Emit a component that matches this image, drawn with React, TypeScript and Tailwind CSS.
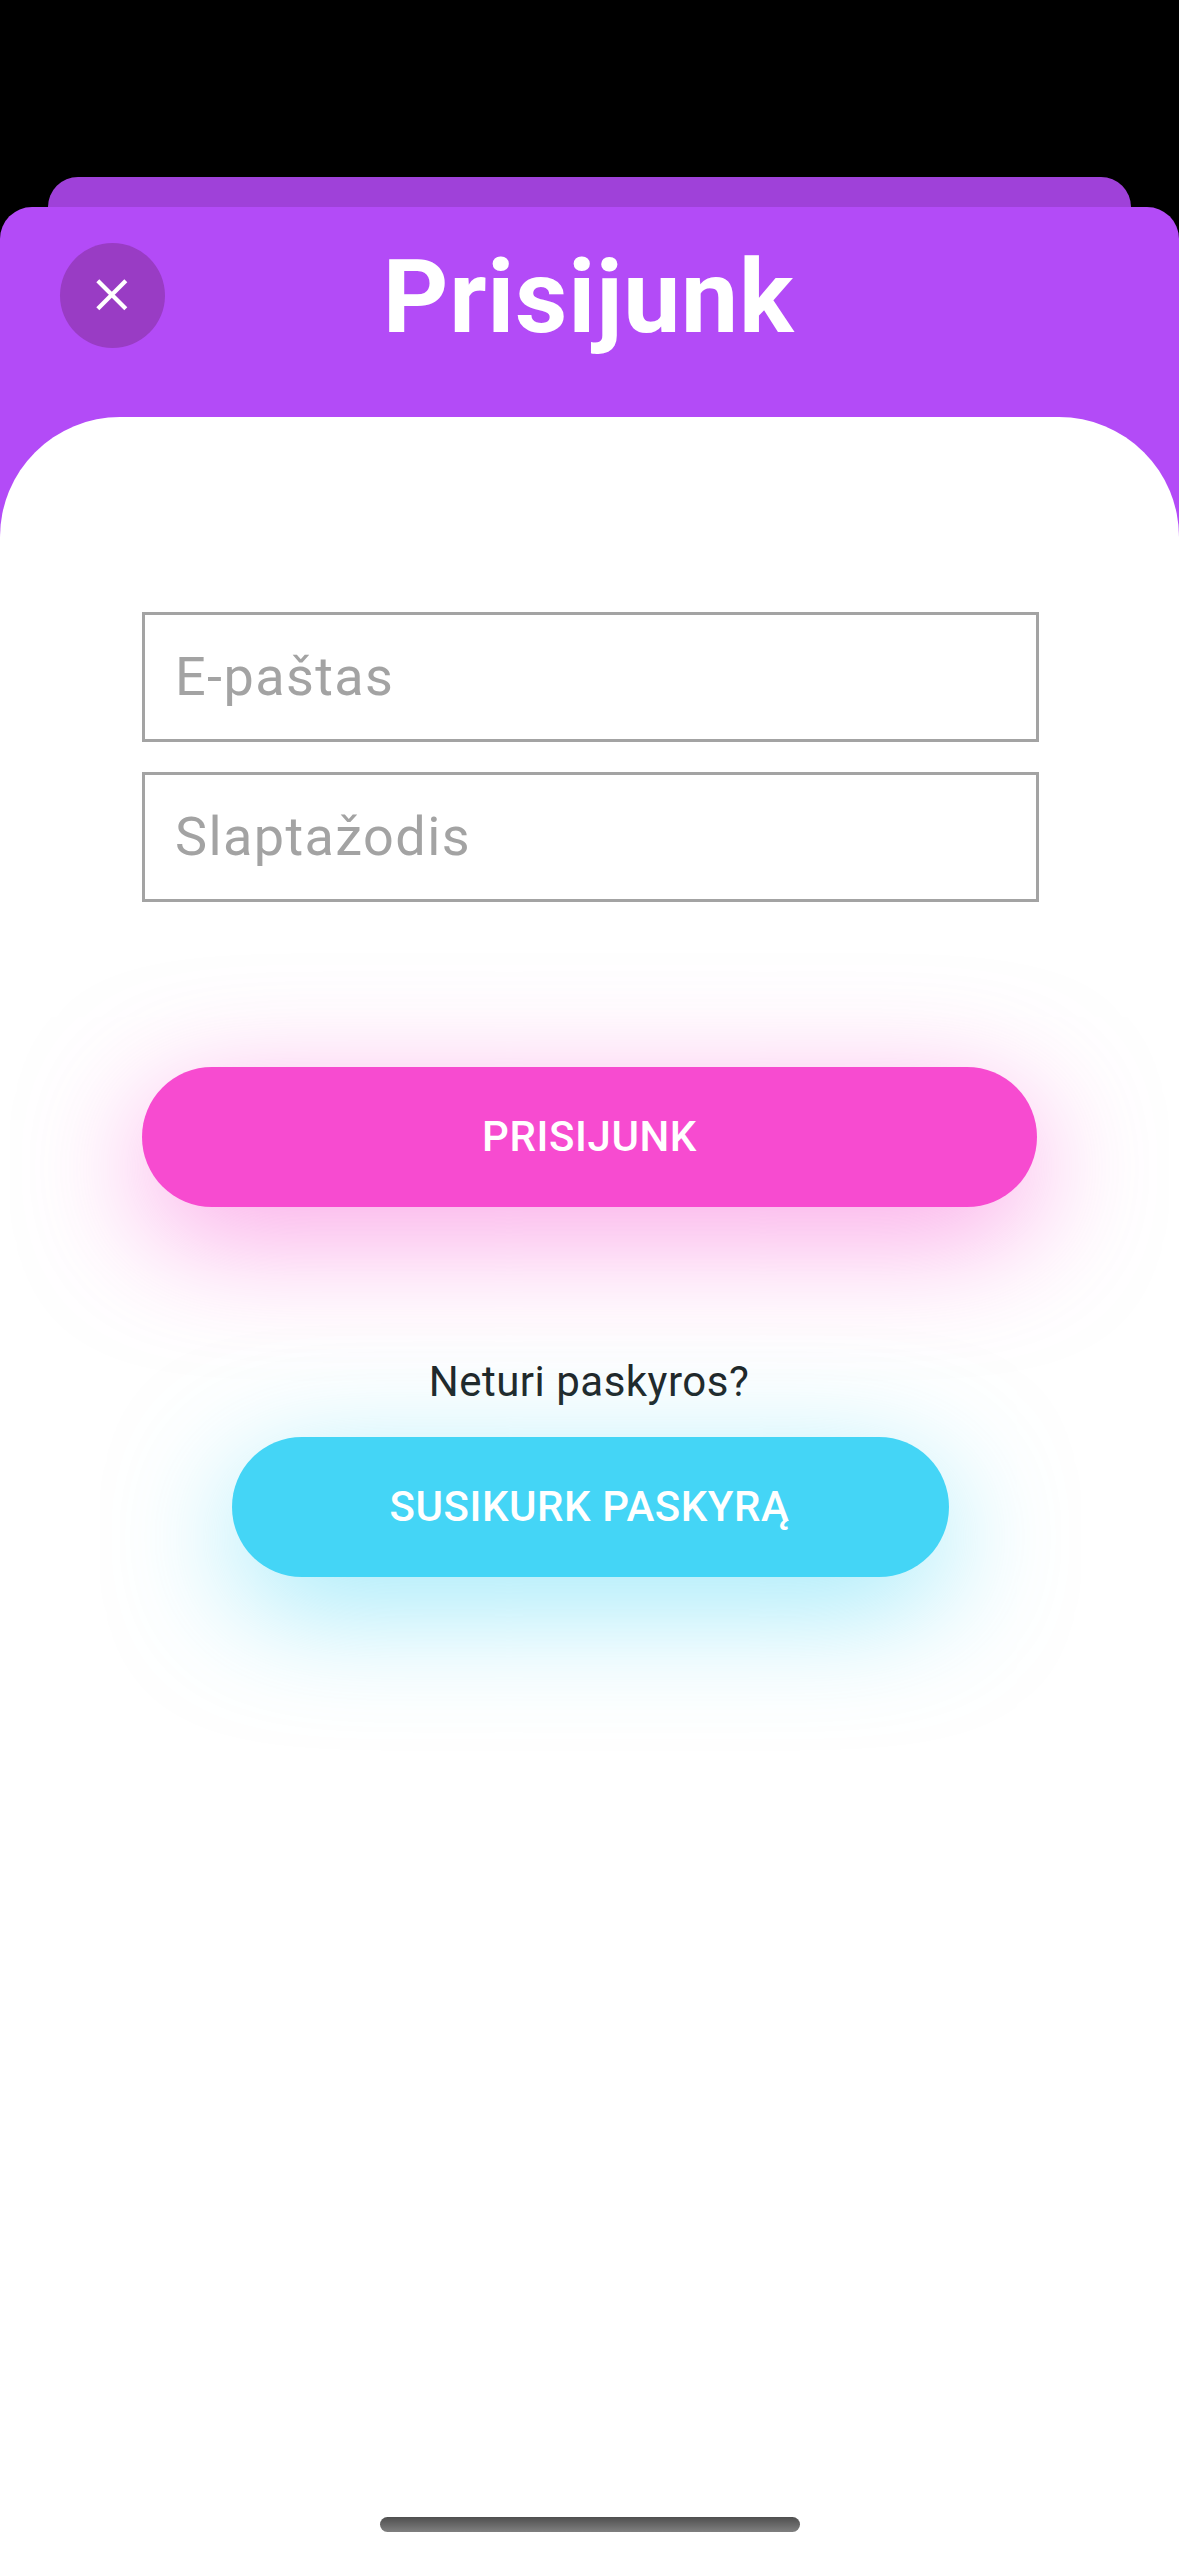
type FieldProps = { type: string; label: string };

function Field({ type, label }: FieldProps) {
  return (
    <input
      type={type}
      placeholder={label}
      aria-label={label}
      className="h-[130px] w-full border-[3px] border-[#a3a3a3] bg-transparent px-[30px] pb-[2px] text-[54px] tracking-[1.4px] text-[#1f2526] outline-none placeholder:text-[#a3a3a3] placeholder:opacity-100"
    />
  );
}

function CloseIcon() {
  return (
    <svg width="33" height="33" viewBox="0 0 33 33" fill="none" stroke="white" strokeWidth="4.2">
      <path d="M1.8 1.8 29.8 29.8M29.8 1.8 1.8 29.8" />
    </svg>
  );
}

export default function App() {
  return (
    <div className="flex h-[2556px] w-[1179px] flex-col overflow-hidden bg-black pt-[177px] font-['Roboto',sans-serif]">
      <div className="mx-[48px] h-[30px] shrink-0 rounded-t-[30px] bg-[#9f41d9]" />
      <div className="flex flex-1 flex-col rounded-t-[32px] bg-[#b34bf7]">
        <header className="grid h-[210px] shrink-0 grid-cols-[105px_1fr_105px] items-start px-[60px] pt-9">
          <button aria-label="Uždaryti" className="flex size-[105px] items-center justify-center rounded-full bg-[#993cc4]">
            <CloseIcon />
          </button>
          <h1 className="pr-[2px] text-center text-[102px] leading-[109px] font-bold tracking-[0.75px] text-white">Prisijunk</h1>
        </header>
        <main className="flex flex-1 flex-col items-center rounded-t-[120px] bg-white pt-[195px]">
          <form className="ml-[2px] flex w-[897px] flex-col gap-[30px]">
            <Field type="email" label="E-paštas" />
            <Field type="password" label="Slaptažodis" />
          </form>
          <button className="mt-[165px] h-[140px] w-[895px] rounded-full bg-[#f74bd0] pb-[2px] text-[42px] font-medium tracking-[0.6px] text-white shadow-[0_30px_120px_rgba(247,75,208,0.5)]">
            PRISIJUNK
          </button>
          <p className="mt-[150px] pr-[1px] text-[42px] leading-[50px] tracking-[0.5px] text-[#1f2526]">Neturi paskyros?</p>
          <button className="mt-[30px] ml-[2px] h-[140px] w-[717px] rounded-full bg-[#44d5f6] pr-[2px] pb-[2px] text-[42px] font-medium tracking-[0.55px] text-white shadow-[0_30px_120px_rgba(68,213,246,0.5)]">
            SUSIKURK PASKYRĄ
          </button>
          <div className="mt-auto mb-[24px] h-[15px] w-[420px] rounded-full bg-linear-to-b from-[#4f4f4f] to-[#808080]" />
        </main>
      </div>
    </div>
  );
}
